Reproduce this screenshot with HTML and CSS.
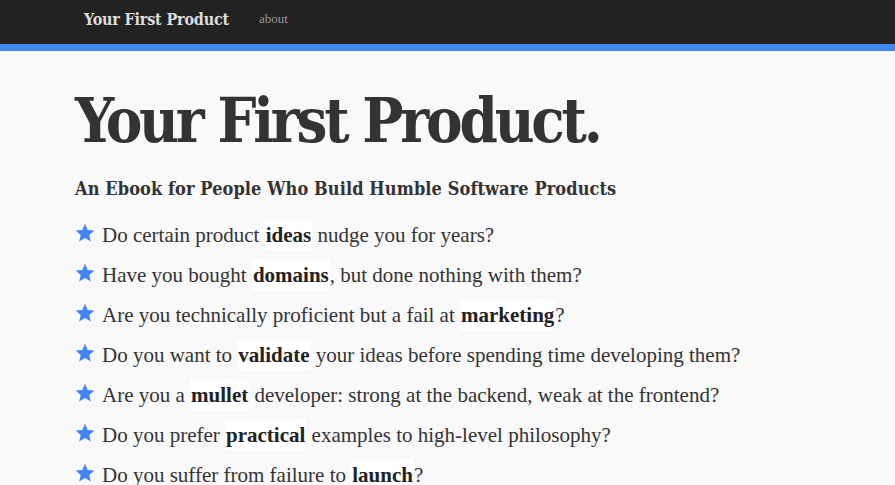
FILE: index.html
```html
<!DOCTYPE html>
<html>
<head>
<meta charset="utf-8">
<link rel="stylesheet" href="styles.css">
</head>
<body>
<header class="navbar">
  <div class="nav-inner">
    <a class="brand">Your First Product</a>
    <a class="nav-link">about</a>
  </div>
</header>
<div class="accent"></div>
<main class="container">
  <h1 class="title">Your First Product.</h1>
  <h2 class="subtitle">An Ebook for People Who Build Humble Software Products</h2>
  <ul class="points">
    <li><svg class="star" viewBox="0 0 24 24"><path d="M12 1l3.2 7.4 8 .7-6.1 5.3 1.9 7.9L12 18.1l-7 4.2 1.9-7.9L.8 9.1l8-.7z"/></svg><span class="text">Do certain product <b>ideas</b> nudge you for years?</span></li>
    <li><svg class="star" viewBox="0 0 24 24"><path d="M12 1l3.2 7.4 8 .7-6.1 5.3 1.9 7.9L12 18.1l-7 4.2 1.9-7.9L.8 9.1l8-.7z"/></svg><span class="text">Have you bought <b>domains</b>, but done nothing with them?</span></li>
    <li><svg class="star" viewBox="0 0 24 24"><path d="M12 1l3.2 7.4 8 .7-6.1 5.3 1.9 7.9L12 18.1l-7 4.2 1.9-7.9L.8 9.1l8-.7z"/></svg><span class="text">Are you technically proficient but a fail at <b>marketing</b>?</span></li>
    <li><svg class="star" viewBox="0 0 24 24"><path d="M12 1l3.2 7.4 8 .7-6.1 5.3 1.9 7.9L12 18.1l-7 4.2 1.9-7.9L.8 9.1l8-.7z"/></svg><span class="text">Do you want to <b>validate</b> your ideas before spending time developing them?</span></li>
    <li><svg class="star" viewBox="0 0 24 24"><path d="M12 1l3.2 7.4 8 .7-6.1 5.3 1.9 7.9L12 18.1l-7 4.2 1.9-7.9L.8 9.1l8-.7z"/></svg><span class="text">Are you a <b>mullet</b> developer: strong at the backend, weak at the frontend?</span></li>
    <li><svg class="star" viewBox="0 0 24 24"><path d="M12 1l3.2 7.4 8 .7-6.1 5.3 1.9 7.9L12 18.1l-7 4.2 1.9-7.9L.8 9.1l8-.7z"/></svg><span class="text">Do you prefer <b>practical</b> examples to high-level philosophy?</span></li>
    <li><svg class="star" viewBox="0 0 24 24"><path d="M12 1l3.2 7.4 8 .7-6.1 5.3 1.9 7.9L12 18.1l-7 4.2 1.9-7.9L.8 9.1l8-.7z"/></svg><span class="text">Do you suffer from failure to <b>launch</b>?</span></li>
  </ul>
</main>
</body>
</html>
```
FILE: styles.css
```css
html, body {
  margin: 0;
  padding: 0;
}
body {
  background: #f9f9f9;
  color: #333;
  font-family: "Liberation Serif", "Times New Roman", serif;
}
.navbar {
  background: #222;
  height: 44px;
}
.nav-inner {
  display: flex;
  align-items: center;
  height: 38px;
  padding-left: 84px;
}
.brand {
  font-family: "DejaVu Serif Condensed", "DejaVu Serif", serif;
  font-weight: bold;
  font-size: 16px;
  letter-spacing: -0.2px;
  color: #ddd;
}
.nav-link {
  margin-left: 30px;
  font-family: "Liberation Serif", serif;
  font-size: 13px;
  color: #999;
}
.accent {
  height: 7px;
  background: #4285f4;
}
.container {
  padding-left: 75px;
}
.title {
  margin: 32px 0 0 0;
  font-family: "DejaVu Serif Condensed", "DejaVu Serif", serif;
  font-weight: bold;
  font-size: 61px;
  letter-spacing: -3.2px;
  line-height: 76px;
  color: #333;
}
.subtitle {
  margin: 18px 0 0 0;
  font-family: "DejaVu Serif Condensed", "DejaVu Serif", serif;
  font-weight: bold;
  font-size: 18px;
  letter-spacing: 0.1px;
  line-height: 24px;
  color: #333;
}
.points {
  list-style: none;
  margin: 14px 0 0 0;
  padding: 0;
}
.points li {
  display: flex;
  align-items: center;
  height: 40px;
}
.text {
  font-family: "Liberation Serif", "Times New Roman", serif;
  font-size: 21px;
  color: #333;
}
.star {
  flex: none;
  width: 20px;
  height: 20px;
  fill: #4285f4;
  margin-right: 7px;
  margin-top: -4px;
}
.points b {
  background: #fff;
  color: #222;
  padding: 3px 1px;
}
```
